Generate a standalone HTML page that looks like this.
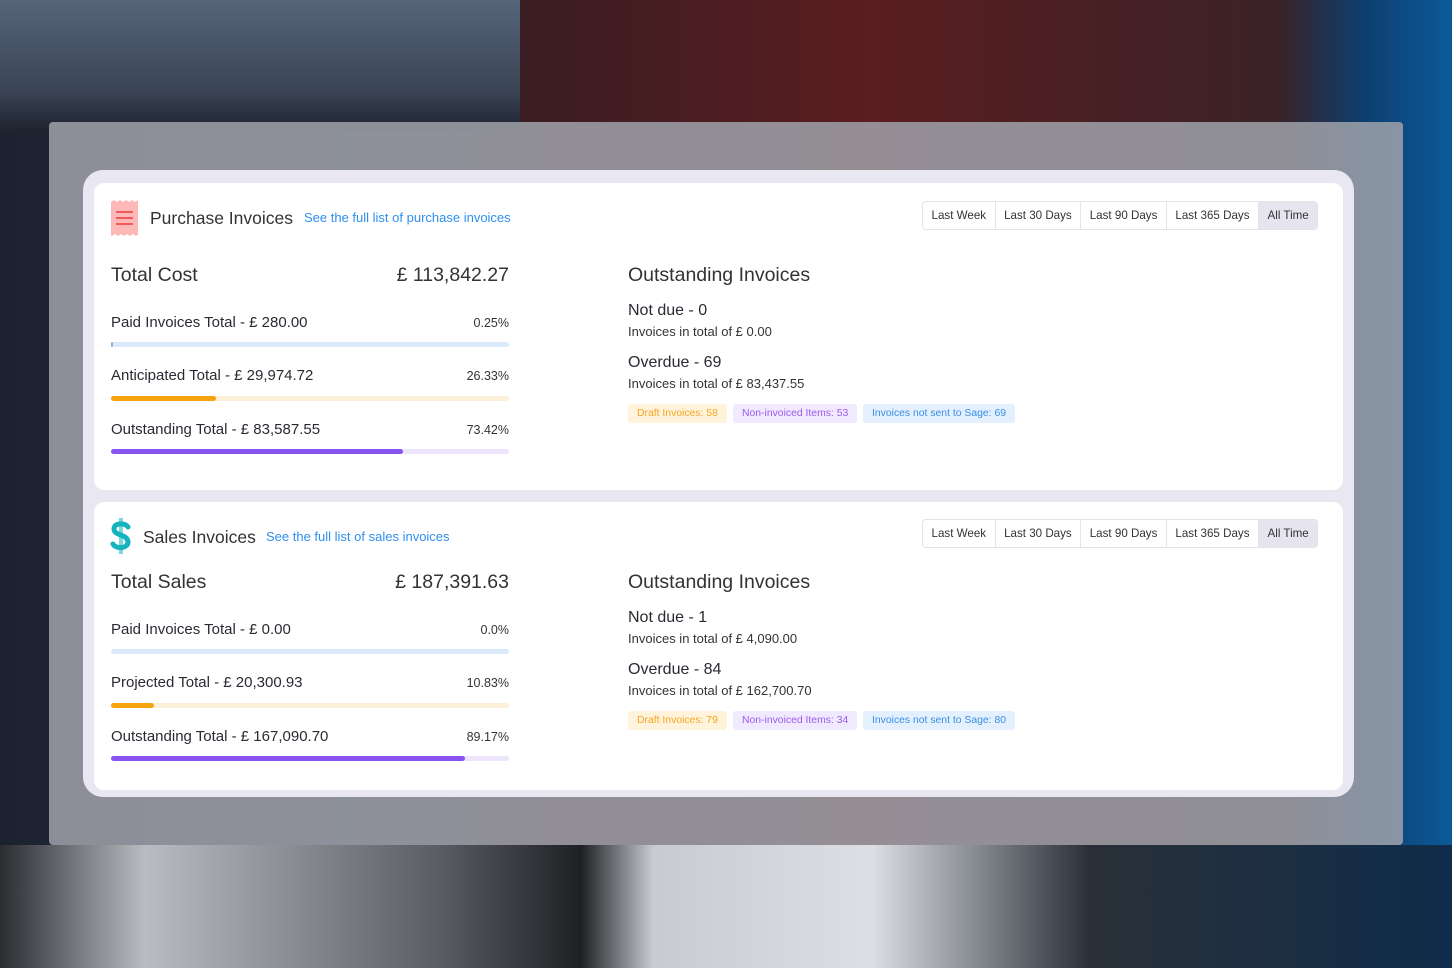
<!DOCTYPE html>
<html><head><meta charset="utf-8"><style>
*{margin:0;padding:0;box-sizing:border-box}
body{width:1452px;height:968px;overflow:hidden;position:relative;font-family:"Liberation Sans",sans-serif;color:#2a2a33;
background:linear-gradient(90deg,#1c2230 0%,#2a3140 30%,#3a1d22 36%,#5a1d20 60%,#3a2226 88%,#0d3f70 94%,#0c5a9a 100%);}
.bgtop{position:absolute;left:0;top:0;width:520px;height:130px;background:linear-gradient(180deg,#56657a,#3a4454 70%,#1f2430);}
.bgbot{position:absolute;left:0;top:845px;width:1452px;height:123px;background:linear-gradient(90deg,#2a2c30 0%,#b9bcc2 10%,#5b5e64 30%,#1e2024 40%,#c8cbd0 45%,#dcdfe4 60%,#2a3038 75%,#0f2c4a 100%);}
.panel{position:absolute;left:49px;top:122px;width:1354px;height:723px;background:rgba(160,162,170,.85);border-radius:4px}
.frame{position:absolute;left:83px;top:170px;width:1271px;height:627px;background:#e9e7f1;border-radius:20px}
.card{position:absolute;left:94px;width:1249px;background:#fff;border-radius:10px}
.abs{position:absolute;white-space:nowrap}
.title{font-size:17.5px;color:#333}
.link{font-size:13px;color:#2f8ff0}
.big{font-size:19.5px;color:#333}
.r{text-align:right;width:300px}
.row{font-size:15px;color:#2a2a33}
.pct{font-size:12.5px;color:#333;text-align:right;width:100px}
.bar{position:absolute;left:17px;width:398px;height:5px;border-radius:3px}
.bar i{display:block;height:5px;border-radius:3px}
.sub{font-size:13px;color:#333}
.tabs{position:absolute;left:828px;display:flex;border:1px solid #e4e2ea;border-radius:4px;height:29px;font-size:11.6px;color:#333}
.tabs div{padding:0 8.5px;line-height:27px;border-right:1px solid #e4e2ea}
.tabs div:last-child{border:0;background:#e6e4ee}
.tag{position:absolute;font-size:10.4px;padding:0 9px;line-height:19px;border-radius:3px}
</style></head><body>
<div class="bgtop"></div><div class="bgbot"></div>
<div class="panel"></div>
<div class="frame"></div>

<div class="card" style="top:183px;height:307px">
 <svg class="abs" style="left:17px;top:17px" width="27" height="36" viewBox="0 0 27 36"><path d="M0 2 l3 -2 3 2 3 -2 3 2 3 -2 3 2 3 -2 3 2 3-2 1 1 V34 l-3 2 -3-2 -3 2 -3-2 -3 2 -3-2 -3 2 -3-2 -3 2 -1-1Z" fill="#ffb8b8"/><rect x="5" y="11" width="17" height="2" fill="#f25a5a"/><rect x="5" y="17" width="17" height="2" fill="#f25a5a"/><rect x="5" y="23" width="17" height="2" fill="#f25a5a"/></svg>
 <div class="abs title" style="left:56px;top:25px">Purchase Invoices</div>
 <div class="abs link" style="left:210px;top:27px">See the full list of purchase invoices</div>
 <div class="tabs" style="top:18px"><div>Last Week</div><div>Last 30 Days</div><div>Last 90 Days</div><div>Last 365 Days</div><div>All Time</div></div>
 <div class="abs big" style="left:17px;top:81px">Total Cost</div>
 <div class="abs big r" style="left:115px;top:81px">£ 113,842.27</div>
 <div class="abs row" style="left:17px;top:131px">Paid Invoices Total - £ 280.00</div><div class="abs pct" style="left:315px;top:133px">0.25%</div>
 <div class="bar" style="top:159px;background:#dbeafb"><i style="width:2px;background:#7fb5f0"></i></div>
 <div class="abs row" style="left:17px;top:184px">Anticipated Total - £ 29,974.72</div><div class="abs pct" style="left:315px;top:186px">26.33%</div>
 <div class="bar" style="top:213px;background:#fdf0d8"><i style="width:105px;background:#f7a310"></i></div>
 <div class="abs row" style="left:17px;top:238px">Outstanding Total - £ 83,587.55</div><div class="abs pct" style="left:315px;top:240px">73.42%</div>
 <div class="bar" style="top:266px;background:#ede5fb"><i style="width:292px;background:#8a52ef"></i></div>
 <div class="abs big" style="left:534px;top:81px">Outstanding Invoices</div>
 <div class="abs" style="left:534px;top:119px;font-size:16px">Not due - 0</div>
 <div class="abs sub" style="left:534px;top:141px">Invoices in total of £ 0.00</div>
 <div class="abs" style="left:534px;top:171px;font-size:16px">Overdue - 69</div>
 <div class="abs sub" style="left:534px;top:193px">Invoices in total of £ 83,437.55</div>
 <div class="tag" style="left:534px;top:221px;background:#fff3dc;color:#f5a623">Draft Invoices: 58</div>
 <div class="tag" style="left:639px;top:221px;background:#f1e9fd;color:#9b5cf0">Non-invoiced Items: 53</div>
 <div class="tag" style="left:769px;top:221px;background:#e4f0fd;color:#3b8ee8">Invoices not sent to Sage: 69</div>
</div>

<div class="card" style="top:502px;height:288px">
 <svg class="abs" style="left:16px;top:16px" width="22" height="36" viewBox="0 0 22 36"><rect x="9" y="0" width="4" height="36" fill="#7dd6dc"/><path d="M18 9 C16 5 4 4 4 11 C4 18 18 16 18 24 C18 31 5 31 3 26" fill="none" stroke="#14b3bd" stroke-width="5" stroke-linecap="round"/></svg>
 <div class="abs title" style="left:49px;top:25px">Sales Invoices</div>
 <div class="abs link" style="left:172px;top:27px">See the full list of sales invoices</div>
 <div class="tabs" style="top:17px"><div>Last Week</div><div>Last 30 Days</div><div>Last 90 Days</div><div>Last 365 Days</div><div>All Time</div></div>
 <div class="abs big" style="left:17px;top:69px">Total Sales</div>
 <div class="abs big r" style="left:115px;top:69px">£ 187,391.63</div>
 <div class="abs row" style="left:17px;top:119px">Paid Invoices Total - £ 0.00</div><div class="abs pct" style="left:315px;top:121px">0.0%</div>
 <div class="bar" style="top:147px;background:#dbeafb"></div>
 <div class="abs row" style="left:17px;top:172px">Projected Total - £ 20,300.93</div><div class="abs pct" style="left:315px;top:174px">10.83%</div>
 <div class="bar" style="top:201px;background:#fdf0d8"><i style="width:43px;background:#f7a310"></i></div>
 <div class="abs row" style="left:17px;top:226px">Outstanding Total - £ 167,090.70</div><div class="abs pct" style="left:315px;top:228px">89.17%</div>
 <div class="bar" style="top:254px;background:#ede5fb"><i style="width:354px;background:#8a52ef"></i></div>
 <div class="abs big" style="left:534px;top:69px">Outstanding Invoices</div>
 <div class="abs" style="left:534px;top:107px;font-size:16px">Not due - 1</div>
 <div class="abs sub" style="left:534px;top:129px">Invoices in total of £ 4,090.00</div>
 <div class="abs" style="left:534px;top:159px;font-size:16px">Overdue - 84</div>
 <div class="abs sub" style="left:534px;top:181px">Invoices in total of £ 162,700.70</div>
 <div class="tag" style="left:534px;top:209px;background:#fff3dc;color:#f5a623">Draft Invoices: 79</div>
 <div class="tag" style="left:639px;top:209px;background:#f1e9fd;color:#9b5cf0">Non-invoiced Items: 34</div>
 <div class="tag" style="left:769px;top:209px;background:#e4f0fd;color:#3b8ee8">Invoices not sent to Sage: 80</div>
</div>
</body></html>
